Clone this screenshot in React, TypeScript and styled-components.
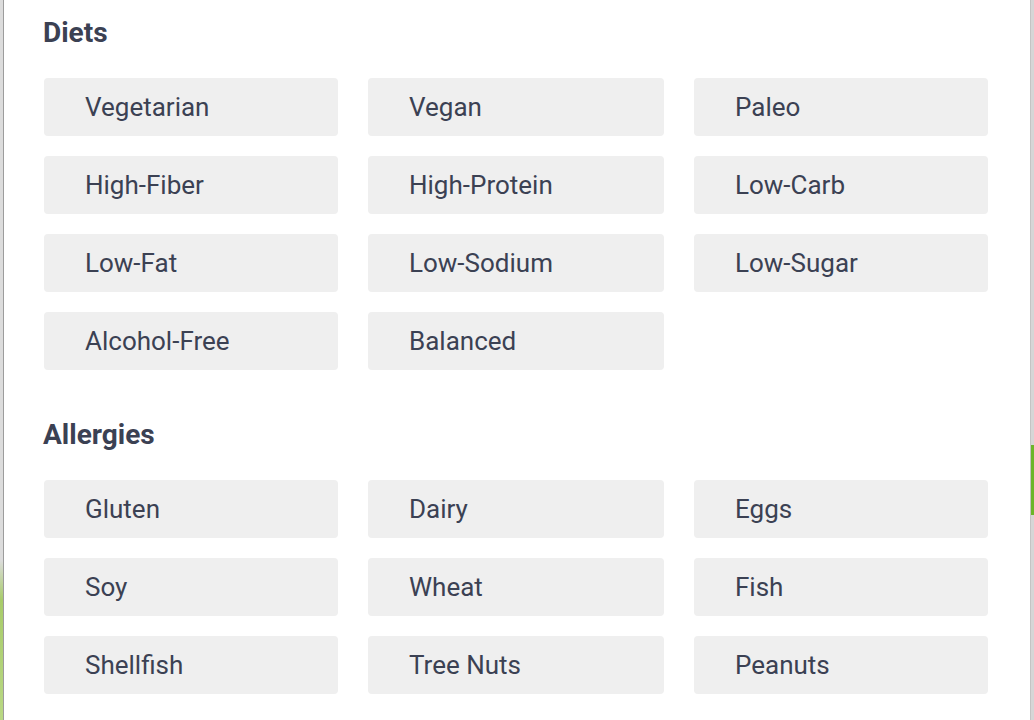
import React from "react";
import styled, { createGlobalStyle } from "styled-components";

const GlobalStyle = createGlobalStyle`
  html, body {
    margin: 0;
    padding: 0;
    height: 100%;
    overflow: hidden;
  }
  body {
    background:
      linear-gradient(180deg, transparent 0, transparent 445px, #6cb52a 445px, #6cb52a 515px, transparent 515px) right top / 3px 100% no-repeat,
      linear-gradient(180deg, #dcdcdc 0, #dcdcdc 560px, #a8cc6a 600px, #b9d884 720px) left top / 3px 100% no-repeat,
      #d6d6d6;
    font-family: Roboto, "Liberation Sans", sans-serif;
  }
`;

const Panel = styled.div`
  margin-left: 3px;
  width: 1028px;
  min-height: 720px;
  box-sizing: border-box;
  background: #ffffff;
  border-left: 1px solid #9c9c9c;
  border-right: 1px solid #c4c4c4;
  padding: 17px 42px 0 40px;
`;

const Section = styled.section`
  & + & {
    margin-top: 49px;
  }
`;

const Heading = styled.h2`
  margin: 0 0 29px -1px;
  height: 32px;
  line-height: 32px;
  font-size: 28px;
  font-weight: 700;
  color: #3b4153;
`;

const Grid = styled.div`
  display: grid;
  grid-template-columns: 294px 296px 294px;
  column-gap: 30px;
  row-gap: 20px;
`;

const Option = styled.button`
  display: flex;
  align-items: center;
  height: 58px;
  padding: 0 0 0 41px;
  border: none;
  border-radius: 4px;
  background: #efefef;
  color: #3b4153;
  font-family: Roboto, "Liberation Sans", sans-serif;
  font-size: 26px;
  font-weight: 400;
  text-align: left;
  cursor: pointer;
`;

const diets = [
  "Vegetarian",
  "Vegan",
  "Paleo",
  "High-Fiber",
  "High-Protein",
  "Low-Carb",
  "Low-Fat",
  "Low-Sodium",
  "Low-Sugar",
  "Alcohol-Free",
  "Balanced",
];

const allergies = [
  "Gluten",
  "Dairy",
  "Eggs",
  "Soy",
  "Wheat",
  "Fish",
  "Shellfish",
  "Tree Nuts",
  "Peanuts",
];

export default function App() {
  return (
    <>
      <GlobalStyle />
      <Panel>
        <Section>
          <Heading>Diets</Heading>
          <Grid>
            {diets.map((d) => (
              <Option key={d}>{d}</Option>
            ))}
          </Grid>
        </Section>
        <Section>
          <Heading>Allergies</Heading>
          <Grid>
            {allergies.map((d) => (
              <Option key={d}>{d}</Option>
            ))}
          </Grid>
        </Section>
      </Panel>
    </>
  );
}
